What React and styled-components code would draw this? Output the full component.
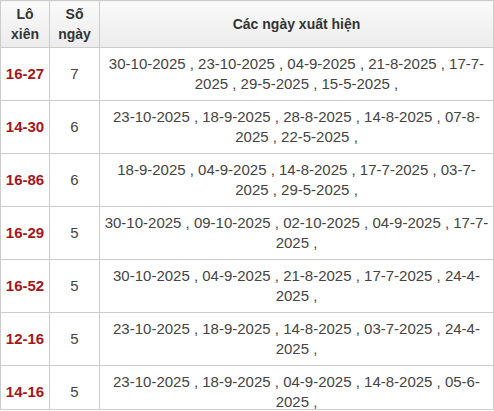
import React from "react";
import styled, { createGlobalStyle } from "styled-components";

const GlobalStyle = createGlobalStyle`
  body {
    margin: 0;
    background: #fff;
    font-family: "Liberation Sans", Arial, sans-serif;
  }
`;

const Frame = styled.div`
  width: 494px;
  height: 410px;
  overflow: hidden;
  border-bottom: 1px solid #ccc;
  box-sizing: border-box;
`;

const Table = styled.table`
  width: 494px;
  border-collapse: collapse;
  table-layout: fixed;
  color: #333;
  font-size: 15px;
  line-height: 20px;
`;

const Th = styled.th`
  border: 1px solid #ccc;
  background: linear-gradient(#fafafa, #ececec);
  font-size: 14px;
  font-weight: bold;
  padding: 3px 2px;
  height: 40px;
  text-align: center;
  color: #333;
`;

const Td = styled.td`
  border: 1px solid #ccc;
  padding: 6px ${(p) => (p.$wide ? "4px" : "2px")};
  height: 40px;
  text-align: center;
  vertical-align: ${(p) => (p.$wide ? "top" : "middle")};
  color: #444;
`;

const Pair = styled.span`
  color: #a5161a;
  font-weight: bold;
`;

const rows = [
  ["16-27", 7, "30-10-2025 , 23-10-2025 , 04-9-2025 , 21-8-2025 , 17-7-2025 , 29-5-2025 , 15-5-2025 ,"],
  ["14-30", 6, "23-10-2025 , 18-9-2025 , 28-8-2025 , 14-8-2025 , 07-8-2025 , 22-5-2025 ,"],
  ["16-86", 6, "18-9-2025 , 04-9-2025 , 14-8-2025 , 17-7-2025 , 03-7-2025 , 29-5-2025 ,"],
  ["16-29", 5, "30-10-2025 , 09-10-2025 , 02-10-2025 , 04-9-2025 , 17-7-2025 ,"],
  ["16-52", 5, "30-10-2025 , 04-9-2025 , 21-8-2025 , 17-7-2025 , 24-4-2025 ,"],
  ["12-16", 5, "23-10-2025 , 18-9-2025 , 14-8-2025 , 03-7-2025 , 24-4-2025 ,"],
  ["14-16", 5, "23-10-2025 , 18-9-2025 , 04-9-2025 , 14-8-2025 , 05-6-2025 ,"],
];

const App = () => {
  return (
    <>
      <GlobalStyle />
      <Frame>
        <Table>
          <colgroup>
            <col style={{ width: 49 }} />
            <col style={{ width: 50 }} />
            <col />
          </colgroup>
          <thead>
            <tr>
              <Th>Lô<br />xiên</Th>
              <Th>Số<br />ngày</Th>
              <Th>Các ngày xuất hiện</Th>
            </tr>
          </thead>
          <tbody>
            {rows.map((item) => (
              <tr key={item[0]}>
                <Td>
                  <Pair>{item[0]}</Pair>
                </Td>
                <Td>{item[1]}</Td>
                <Td $wide>{item[2]}</Td>
              </tr>
            ))}
          </tbody>
        </Table>
      </Frame>
    </>
  );
};

export default App;
